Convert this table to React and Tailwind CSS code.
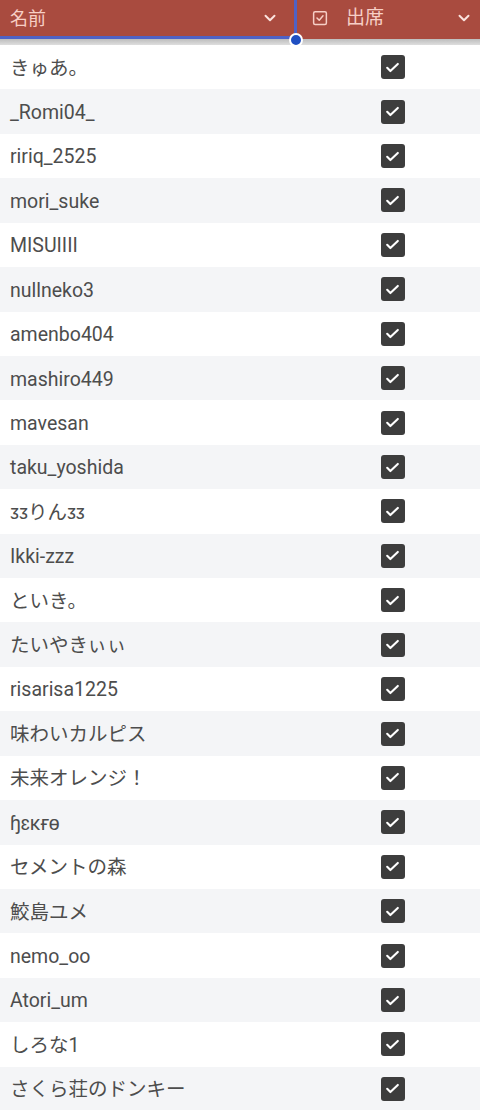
const names = [
  'きゅあ。',
  '_Romi04_',
  'ririq_2525',
  'mori_suke',
  'MISUIIII',
  'nullneko3',
  'amenbo404',
  'mashiro449',
  'mavesan',
  'taku_yoshida',
  'ᴣᴣりんᴣᴣ',
  'Ikki-zzz',
  'といき。',
  'たいやきぃぃ',
  'risarisa1225',
  '味わいカルピス',
  '未来オレンジ！',
  'ɧɛĸғɵ',
  'セメントの森',
  '鮫島ユメ',
  'nemo_oo',
  'Atori_um',
  'しろな1',
  'さくら荘のドンキー'
]

const Chevron = ({ className = '' }) => (
  <svg className={className} viewBox="0 0 24 24" fill="none" stroke="currentColor" strokeWidth="2.6" strokeLinecap="round" strokeLinejoin="round">
    <path d="M6 9l6 6 6-6" />
  </svg>
)

const CheckIcon = () => (
  <svg className="w-[17px] h-[17px]" viewBox="0 0 24 24" fill="none" stroke="white" strokeWidth="3" strokeLinecap="round" strokeLinejoin="round">
    <path d="M4.5 12.5l4.5 4.5L19.5 7" />
  </svg>
)

const Row = ({ name, index }) => (
  <div className={`flex items-center h-[44.43px] ${index % 2 === 1 ? 'bg-[#f4f5f7]' : 'bg-white'}`}>
    <div className="w-[296px] pl-[10px] pt-[2px] text-[19.5px] text-[#4d4d4d] truncate">{name}</div>
    <div className="flex-1 flex justify-center pl-[9px]">
      <div className="w-[24px] h-[24px] rounded-[3px] bg-[#3d3d3d] flex items-center justify-center">
        <CheckIcon />
      </div>
    </div>
  </div>
)

export default function App() {
  return (
    <div className="w-[480px] h-[1110px] overflow-hidden bg-white" style={{ fontFamily: 'Roboto, "Noto Sans CJK JP", sans-serif' }}>
      <div className="relative">
        <div className="flex h-[39px] bg-[#a94b3f]">
          <div className="w-[294px] flex flex-col">
            <div className="flex-1 flex items-center justify-between pl-[10px] pr-[15px] text-[#f7cfc6]">
              <span className="text-[18px]">名前</span>
              <Chevron className="w-[18px] h-[18px] text-[#fbe3de]" />
            </div>
            <div className="h-[3px] bg-[#4f62c6]" />
          </div>
          <div className="w-[3px] bg-[#4f62c6]" />
          <div className="flex-1 flex items-center pl-[14px] pr-[7px] pb-[3px] text-[#f7cfc6]">
            <svg className="w-[18px] h-[18px]" viewBox="0 0 24 24" fill="none" stroke="currentColor" strokeWidth="2" strokeLinecap="round" strokeLinejoin="round">
              <rect x="3.5" y="3.5" width="17" height="17" rx="2" />
              <path d="M8 12l3 3 5-6" />
            </svg>
            <span className="ml-[17px] text-[19px]">出席</span>
            <Chevron className="ml-auto w-[18px] h-[18px] text-[#fbe3de]" />
          </div>
        </div>
        <div className="h-[6px] bg-gradient-to-b from-[#bdbdbd] to-[#dedede]" />
        <div className="absolute left-[289px] top-[33px] w-[14px] h-[14px] rounded-full bg-[#1f4fc2] border-2 border-white" />
      </div>
      {names.map((name, i) => (
        <Row key={i} name={name} index={i} />
      ))}
    </div>
  )
}
